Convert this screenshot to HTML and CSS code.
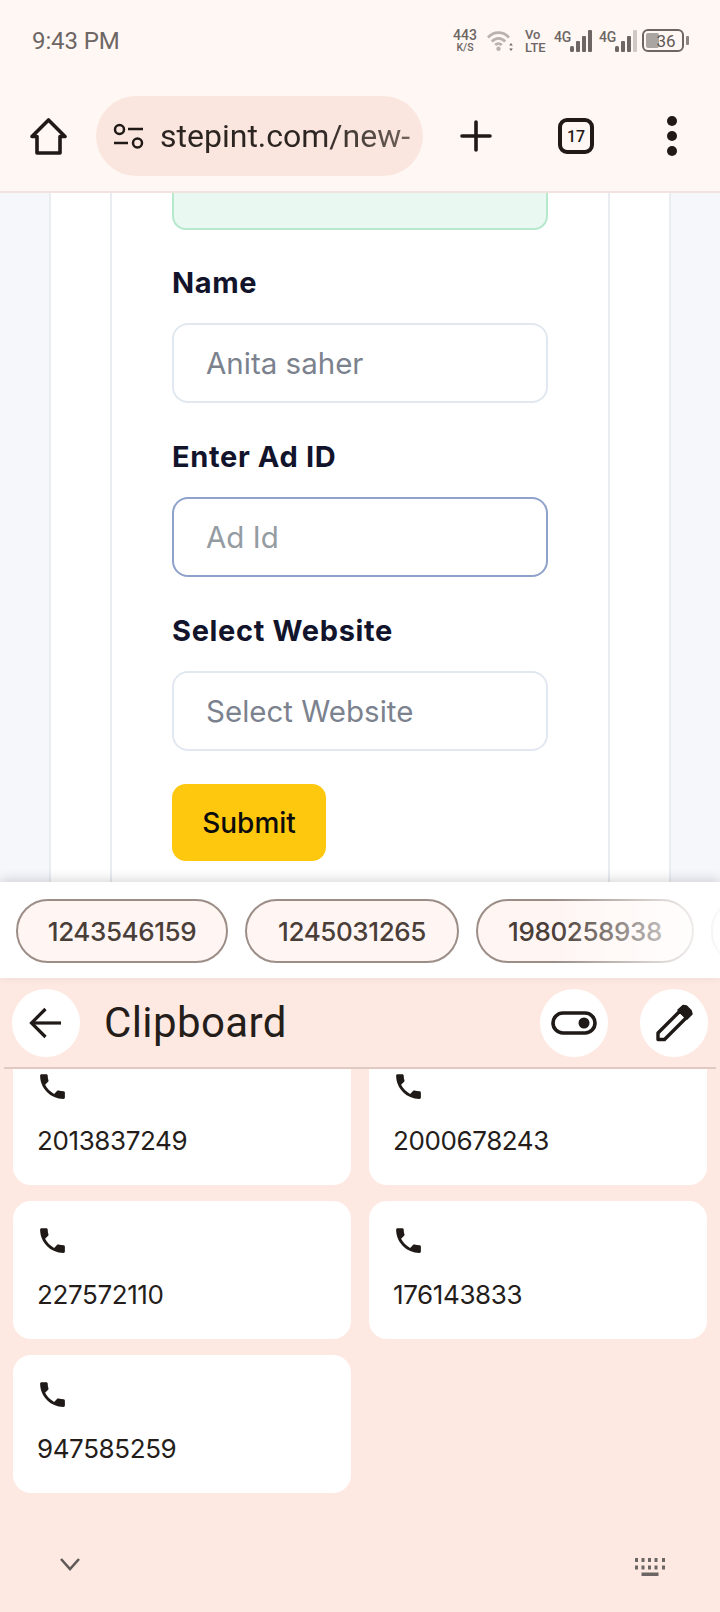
FILE: index.html
```html
<!DOCTYPE html>
<html lang="en">
<head>
<meta charset="utf-8">
<title>Clipboard</title>
<link rel="stylesheet" href="styles.css">
</head>
<body>
<div class="phone">
  <header class="status">
    <span class="time">9:43 PM</span>
    <div class="indicators">
      <div class="speed"><span class="speed-num">443</span><span class="speed-unit">K/S</span></div>
      <svg class="wifi" width="26" height="22" viewBox="0 0 26 22" fill="none" stroke="#b9b2af" stroke-width="2.800">
        <path d="M1 7.500C7 1 16 1 22 7.500"/><path d="M4.800 11.500C9 7.300 14 7.300 18.200 11.500"/><path d="M8.200 15C10 13.300 13 13.300 14.800 15"/>
        <circle cx="11.500" cy="18.800" r="2.200" fill="#b9b2af" stroke="none"/>
        <path d="M24 13l-1.800 2.500h3.600zM24 21l-1.800-2.500h3.600z" fill="#6d6664" stroke="none"/>
      </svg>
      <div class="volte"><span>Vo</span><span>LTE</span></div>
      <div class="sim"><span class="sim-label">4G</span>
        <svg width="22" height="22" viewBox="0 0 22 22"><rect x="0" y="16" width="4" height="6" rx="1.500" fill="#6d6664"/><rect x="6" y="11" width="4" height="11" rx="1" fill="#6d6664"/><rect x="12" y="6" width="4" height="16" rx="1" fill="#6d6664"/><rect x="18" y="0" width="4" height="22" rx="1" fill="#6d6664"/></svg>
      </div>
      <div class="sim"><span class="sim-label">4G</span>
        <svg width="22" height="22" viewBox="0 0 22 22"><rect x="0" y="16" width="4" height="6" rx="1.500" fill="#6d6664"/><rect x="6" y="11" width="4" height="11" rx="1" fill="#6d6664"/><rect x="12" y="6" width="4" height="16" rx="1" fill="#6d6664"/><rect x="18" y="0" width="4" height="22" rx="1" fill="#cfc9c6"/></svg>
      </div>
      <div class="battery"><div class="battery-body"><span class="battery-level"></span><span class="battery-num">36</span></div><span class="battery-nub"></span></div>
    </div>
  </header>

  <nav class="toolbar">
    <svg class="home" width="37" height="37" viewBox="0 0 37 37" fill="none" stroke="#1f1a17" stroke-width="3.600" stroke-linejoin="round"><path d="M2 18.500L18.500 2L35 18.500H30V35H7V18.500Z"/></svg>
    <div class="pill">
      <svg class="tune" width="31" height="26" viewBox="0 0 31 26" fill="none" stroke="#1f1a17" stroke-width="2.500"><circle cx="6.500" cy="6.500" r="4.500"/><path d="M15 6H30"/><path d="M1 20H15"/><circle cx="24.500" cy="20" r="4.500"/></svg>
      <span class="url">stepint.com/new-</span>
    </div>
    <svg class="plus" width="32" height="32" viewBox="0 0 32 32" stroke="#1f1a17" stroke-width="3.600" stroke-linecap="round"><path d="M2 16H30M16 2V30"/></svg>
    <div class="tabs">17</div>
    <div class="dots"><span></span><span></span><span></span></div>
  </nav>

  <main class="page">
    <div class="outer">
      <div class="inner">
        <div class="notice"></div>
        <form class="form">
          <label class="label">Name</label>
          <div class="input">Anita saher</div>
          <label class="label">Enter Ad ID</label>
          <div class="input input-focus">Ad Id</div>
          <label class="label">Select Website</label>
          <div class="input">Select Website</div>
          <div class="submit">Submit</div>
        </form>
      </div>
    </div>
  </main>

  <section class="strip">
    <div class="chip">1243546159</div>
    <div class="chip chip-mid">1245031265</div>
    <div class="chip chip-wide">1980258938</div>
    <div class="chip chip-cut"></div>
    <div class="strip-fade"></div>
  </section>

  <section class="keyboard">
    <div class="kb-head">
      <div class="round">
        <svg width="34" height="32" viewBox="0 0 34 32" fill="none" stroke="#1f1a17" stroke-width="3.200"><path d="M16.500 2L2.500 16L16.500 30"/><path d="M3 16H32"/></svg>
      </div>
      <h1 class="kb-title">Clipboard</h1>
      <div class="round">
        <svg width="46" height="24" viewBox="0 0 46 24" fill="none" stroke="#1f1a17" stroke-width="3.600"><rect x="2" y="2" width="42" height="20" rx="10"/><circle cx="33" cy="12" r="5.500" fill="#1f1a17" stroke="none"/></svg>
      </div>
      <div class="round round-last">
        <svg width="68" height="68" viewBox="0 0 68 68" fill="none" stroke="#1f1a17" stroke-width="3.400" stroke-linejoin="round"><path d="M18 50.500V44L40 22L46.500 28.500L24.500 50.500Z"/><path d="M43 16.500L46.500 17L51 21.500L52 25L47 30L38 21Z" fill="#1f1a17" stroke-width="1.500"/></svg>
      </div>
    </div>
    <div class="clips">
      <div class="grid">
        <div class="card"><svg class="call" width="33" height="33" viewBox="0 0 24 24"><path d="M6.620 10.790c1.440 2.830 3.760 5.140 6.590 6.590l2.200-2.200c.27-.27.67-.36 1.020-.24 1.120.37 2.330.57 3.570.57.55 0 1 .45 1 1V20c0 .55-.45 1-1 1-9.390 0-17-7.610-17-17 0-.55.45-1 1-1h3.500c.55 0 1 .45 1 1 0 1.250.2 2.450.57 3.570.11.35.03.74-.25 1.020l-2.200 2.200z"/></svg><span class="num">2013837249</span></div>
        <div class="card"><svg class="call" width="33" height="33" viewBox="0 0 24 24"><path d="M6.620 10.790c1.440 2.830 3.760 5.140 6.590 6.590l2.200-2.200c.27-.27.67-.36 1.020-.24 1.120.37 2.330.57 3.570.57.55 0 1 .45 1 1V20c0 .55-.45 1-1 1-9.390 0-17-7.610-17-17 0-.55.45-1 1-1h3.500c.55 0 1 .45 1 1 0 1.250.2 2.450.57 3.570.11.35.03.74-.25 1.020l-2.200 2.200z"/></svg><span class="num">2000678243</span></div>
        <div class="card"><svg class="call" width="33" height="33" viewBox="0 0 24 24"><path d="M6.620 10.790c1.440 2.830 3.760 5.140 6.590 6.590l2.200-2.200c.27-.27.67-.36 1.020-.24 1.120.37 2.330.57 3.570.57.55 0 1 .45 1 1V20c0 .55-.45 1-1 1-9.390 0-17-7.610-17-17 0-.55.45-1 1-1h3.500c.55 0 1 .45 1 1 0 1.250.2 2.450.57 3.570.11.35.03.74-.25 1.020l-2.200 2.200z"/></svg><span class="num">227572110</span></div>
        <div class="card"><svg class="call" width="33" height="33" viewBox="0 0 24 24"><path d="M6.620 10.790c1.440 2.830 3.760 5.140 6.590 6.590l2.200-2.200c.27-.27.67-.36 1.020-.24 1.120.37 2.330.57 3.570.57.55 0 1 .45 1 1V20c0 .55-.45 1-1 1-9.390 0-17-7.610-17-17 0-.55.45-1 1-1h3.500c.55 0 1 .45 1 1 0 1.250.2 2.450.57 3.570.11.35.03.74-.25 1.020l-2.200 2.200z"/></svg><span class="num">176143833</span></div>
        <div class="card"><svg class="call" width="33" height="33" viewBox="0 0 24 24"><path d="M6.620 10.790c1.440 2.830 3.760 5.140 6.590 6.590l2.200-2.200c.27-.27.67-.36 1.020-.24 1.120.37 2.330.57 3.570.57.55 0 1 .45 1 1V20c0 .55-.45 1-1 1-9.390 0-17-7.610-17-17 0-.55.45-1 1-1h3.500c.55 0 1 .45 1 1 0 1.250.2 2.450.57 3.570.11.35.03.74-.25 1.020l-2.200 2.200z"/></svg><span class="num">947585259</span></div>
      </div>
    </div>
    <div class="kb-foot">
      <svg width="20" height="13" viewBox="0 0 20 13" fill="none" stroke="#5f5a58" stroke-width="2.600"><path d="M1 1L10 11L19 1"/></svg>
      <svg width="30" height="18" viewBox="0 0 30 18" fill="#6b6563"><path d="M0 0h3v4H0zM6.500 0h3v4h-3zM13 0h3v4h-3zM19.500 0h3v4h-3zM27 0h3v4h-3zM0 7.500h3v4H0zM6.500 7.500h3v4h-3zM13 7.500h3v4h-3zM19.500 7.500h3v4h-3zM27 7.500h3v4h-3zM6.500 14.500h17V18h-17z"/></svg>
    </div>
  </section>
</div>
</body>
</html>
```
FILE: styles.css
```css
* { box-sizing: border-box; }
html, body { margin: 0; padding: 0; }
body { background: #fff; font-family: "Roboto", "Liberation Sans", sans-serif; }

.phone { width: 720px; height: 1612px; overflow: hidden; display: flex; flex-direction: column; }

/* status bar */
.status { height: 80px; flex: none; background: #fff7f4; display: flex; align-items: center; justify-content: space-between; padding: 1px 31px 0 32px; }
.time { font-size: 24px; color: #6d6664; letter-spacing: -.1px; }
.indicators { display: flex; align-items: center; color: #6d6664; }
.speed { display: flex; flex-direction: column; align-items: center; width: 24px; margin-right: 10px; font-weight: 500; }
.speed-num { font-size: 14px; line-height: 13px; }
.speed-unit { font-size: 10.500px; line-height: 11px; }
.wifi { margin-right: 12px; }
.volte { display: flex; flex-direction: column; width: 20px; font-size: 13px; line-height: 13px; font-weight: 500; margin-right: 9px; }
.sim { display: flex; align-items: center; margin-right: 7px; }
.sim-label { font-size: 14px; font-weight: 500; width: 16px; align-self: flex-start; line-height: 14px; letter-spacing: -.3px; }
.battery { display: flex; align-items: center; margin-left: -2px; }
.battery-body { position: relative; width: 42px; height: 23px; border: 2px solid #6d6664; border-radius: 6px; display: flex; align-items: center; justify-content: center; }
.battery-level { position: absolute; left: 2px; top: 2px; bottom: 2px; width: 13px; background: #aba5a2; border-radius: 2px; }
.battery-num { position: relative; font-size: 17px; color: #5f5856; margin-left: 6px; }
.battery-nub { width: 3px; height: 9px; margin-left: 2px; background: #8a8482; border-radius: 1px; }

/* browser toolbar */
.toolbar { height: 113px; flex: none; background: #fff7f4; border-bottom: 2px solid #f2e3de; display: flex; align-items: center; padding: 1px 0 0 30px; }
.pill { width: 327px; height: 80px; margin-left: 29px; border-radius: 40px; background: #fae6de; display: flex; align-items: center; padding-left: 17px; overflow: hidden; }
.url { margin-left: 16px; font-size: 32px; white-space: nowrap; color: transparent; background: linear-gradient(to right, #2b2421 62%, #6f625c 100%); background-clip: text; -webkit-background-clip: text; }
.plus { margin-left: 37px; }
.tabs { width: 36px; height: 36px; margin-left: 66px; border: 4px solid #1f1a17; border-radius: 9px; display: flex; align-items: center; justify-content: center; font-size: 16px; font-weight: 500; color: #1f1a17; }
.dots { margin-left: 73px; display: flex; flex-direction: column; gap: 5px; }
.dots span { width: 10px; height: 10px; border-radius: 50%; background: #1f1a17; }

/* page behind */
.page { height: 689px; flex: none; overflow: hidden; background: #f5f7fb; padding: 0 49px; }
.outer { height: 100%; background: #fff; border: solid #e9ecf1; border-width: 0 2px; padding: 0 59px; }
.inner { height: 100%; border: solid #e9ecf1; border-width: 0 2px; padding: 0 60px; }
.notice { height: 37px; background: #e9f8f0; border: 2px solid #b5e8cd; border-top: 0; border-radius: 0 0 14px 14px; }
.form { display: flex; flex-direction: column; align-items: stretch; margin-top: -1px; }
.label { font-family: "Inter", "Liberation Sans", sans-serif; font-size: 29px; font-weight: 700; letter-spacing: .65px; line-height: 40px; color: #12142c; margin: 34px 0 20px; }
.input { height: 80px; border: 2px solid #e2e8f0; border-radius: 16px; padding-left: 32px; display: flex; align-items: center; font-family: "Inter", "Liberation Sans", sans-serif; font-size: 29.500px; color: #7b828e; }
.input-focus { border-color: #8ea2cc; color: #949ca2; }
.submit { width: 154px; height: 77px; margin-top: 33px; background: #fec80e; border-radius: 14px; display: flex; align-items: center; justify-content: center; font-family: "Inter", "Liberation Sans", sans-serif; font-size: 28px; font-weight: 500; color: #0c0c0c; }

/* suggestion strip */
.strip { position: relative; z-index: 1; height: 96px; flex: none; background: #fff; box-shadow: 0 -3px 10px rgba(40, 40, 50, .16); display: flex; align-items: center; gap: 17px; padding: 2px 0 0 16px; overflow: hidden; }
.chip { flex: none; width: 212px; height: 64px; border: 2px solid #9c8d87; border-radius: 32px; background: #fff6f3; display: flex; align-items: center; justify-content: center; font-family: "Inter", "Liberation Sans", sans-serif; font-size: 26px; font-weight: 500; letter-spacing: -.4px; color: #4a3e39; }
.chip-mid { width: 214px; }
.chip-wide { width: 218px; }
.chip-cut { width: 60px; }
.strip-fade { position: absolute; top: 0; bottom: 0; right: 0; width: 165px; background: linear-gradient(to right, rgba(255, 255, 255, 0), rgba(255, 255, 255, .78) 78%, rgba(255, 255, 255, .95) 100%); }

/* clipboard keyboard */
.keyboard { flex: 1; min-height: 0; background: #fee9e2; display: flex; flex-direction: column; }
.kb-head { height: 91px; flex: none; margin: 0 4px; border-bottom: 2px solid #e0c9c1; display: flex; align-items: flex-start; padding: 11px 8px 0; }
.round { width: 68px; height: 68px; flex: none; border-radius: 50%; background: #fff; display: flex; align-items: center; justify-content: center; }
.kb-title { flex: 1; margin: 0 0 0 24px; font-size: 42px; font-weight: 400; line-height: 68px; color: #241d1a; letter-spacing: .4px; }
.round-last { margin-left: 32px; }
.clips { flex: 1; min-height: 0; overflow: hidden; padding: 0 13px; }
.grid { margin-top: -22px; display: grid; grid-template-columns: 338px 338px; grid-auto-rows: 138px; column-gap: 18px; row-gap: 16px; }
.card { background: #fff; border-radius: 18px; padding: 23px 24px 0; display: flex; flex-direction: column; }
.call { fill: #1f1a17; margin-left: -1px; }
.num { margin-top: 21px; font-family: "Inter", "Liberation Sans", sans-serif; font-size: 26px; letter-spacing: -.4px; line-height: 34px; color: #241d1a; }
.kb-foot { height: 90px; flex: none; display: flex; justify-content: space-between; align-items: flex-start; padding: 36px 55px 0 60px; }
```
